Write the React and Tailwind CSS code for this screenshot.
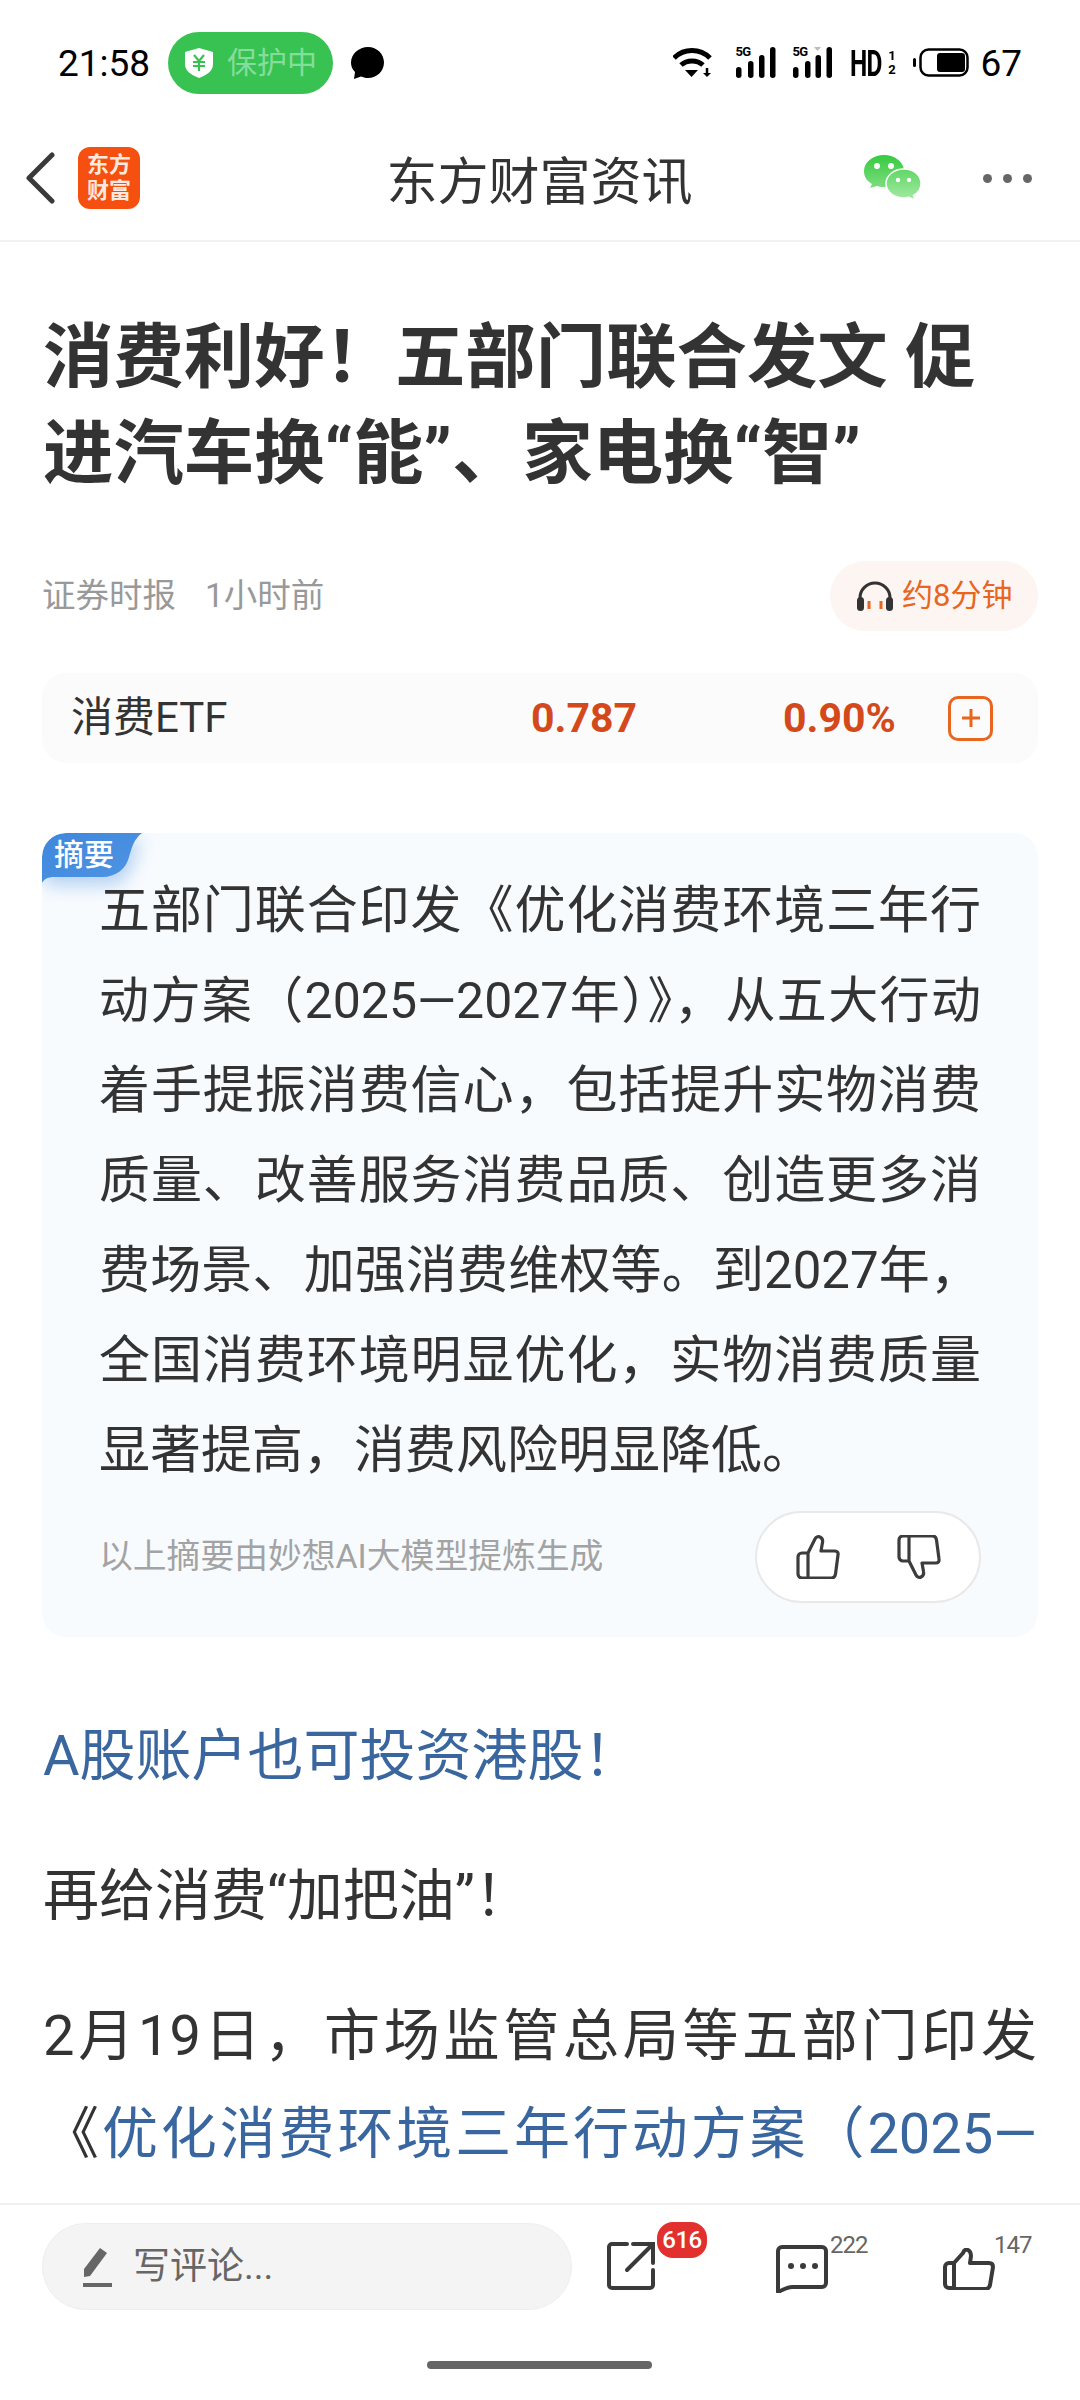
const SignalIcon = ({ bars, arrow }) => (
  <div className="relative h-[32px] w-[41px]">
    <span className="absolute left-0 top-[-2px] text-[13px] font-bold leading-[14px] tracking-[-0.5px] text-black">5G</span>
    <svg width="41" height="32" viewBox="0 0 41 32" className="absolute left-0 top-0">
      <rect x={bars[0]} y="20" width="5.500" height="11" rx="2.750" fill="#000" />
      <rect x={bars[1]} y="14" width="5.500" height="17" rx="2.750" fill="#000" />
      <rect x={bars[2]} y="8" width="5.500" height="23" rx="2.750" fill="#000" />
      <rect x={bars[3]} y="0" width="5.500" height="31" rx="2.750" fill="#000" />
      {arrow && <path d="M22 0h7l-3.500 4z" fill="#bbb" />}
    </svg>
  </div>
);

const StatusBar = () => (
  <div className="flex h-[100px] shrink-0 items-center justify-between pl-[58px] pr-[58px] pt-[26px]">
    <div className="flex items-center">
      <span className="w-[92px] text-[37px] leading-none text-black">21:58</span>
      <div className="ml-[18px] flex h-[62px] w-[165px] items-center rounded-[31px] bg-[#37c252] pl-[17px]">
        <svg width="28" height="30" viewBox="0 0 28 30">
          <path d="M14 0l14 4v12c0 7-6 11-14 14C6 27 0 23 0 16V4z" fill="#fff" />
          <path d="M9 7l5 6 5-6M8 14h12M8 18h12M14 13v10" stroke="#37c252" strokeWidth="2.200" fill="none" />
        </svg>
        <span className="ml-[14px] text-[30px] leading-none text-[#86dd9b]">保护中</span>
      </div>
      <svg width="34" height="32" viewBox="0 0 34 32" className="ml-[17px]">
        <path d="M18 0c9 0 16 7 16 15.500S27 31 18 31c-3 0-5-.6-7-1.500L4 32l1-7C2 22 1 19 1 15.500 1 7 9 0 18 0z" fill="#000" />
      </svg>
    </div>
    <div className="flex items-center">
      <svg width="40" height="30" viewBox="0 0 40 30">
        <path d="M1 10C11 0 27 0 37 10" stroke="#000" strokeWidth="5" fill="none" />
        <path d="M8 17c6-5.500 16-5.500 22 0" stroke="#000" strokeWidth="5" fill="none" />
        <path d="M12 22h13l-6.500 7z" fill="#000" />
        <path d="M34 20v6" stroke="#000" strokeWidth="2.500" />
        <path d="M30 25h8l-4 4z" fill="#000" />
      </svg>
      <div className="ml-[22px]"><SignalIcon bars={[1, 13, 24, 35]} /></div>
      <div className="ml-[16px]"><SignalIcon bars={[1, 13, 23.500, 34.500]} arrow /></div>
      <div className="ml-[17px] flex h-[30px] w-[30px] items-center">
        <span className="origin-left scale-x-[0.66] text-[37px] font-bold leading-none tracking-[-1px] text-black">HD</span>
      </div>
      <div className="ml-[8px] flex w-[7px] flex-col items-center text-[13px] font-bold leading-[14px] text-black">
        <span>1</span>
        <span>2</span>
      </div>
      <svg width="56" height="30" viewBox="0 0 56 30" className="ml-[18px]">
        <rect x="0" y="10" width="3" height="9" rx="1.500" fill="#000" />
        <rect x="7.500" y="1.500" width="47" height="26" rx="8" fill="none" stroke="#000" strokeWidth="2.500" />
        <rect x="24" y="5" width="28" height="19" rx="3" fill="#000" />
      </svg>
      <span className="ml-[11px] text-[37px] leading-none text-black">67</span>
    </div>
  </div>
);

const Header = () => (
  <div className="grid h-[142px] shrink-0 grid-cols-[1fr_auto_1fr] items-center border-b-2 border-[#f1f1f1] pl-[25px] pr-[48px] pt-[16px]">
    <div className="flex items-center">
      <svg width="30" height="52" viewBox="0 0 30 52">
        <path d="M27 3L4 26l23 23" stroke="#3a3a3a" strokeWidth="5" strokeLinecap="round" strokeLinejoin="round" fill="none" />
      </svg>
      <div className="ml-[23px] flex h-[62px] w-[62px] flex-col items-center justify-center rounded-[12px] bg-[#f5500f] text-[22px] font-bold leading-[26px] text-[#fde9df]">
        <span>东方</span>
        <span>财富</span>
      </div>
    </div>
    <div className="pl-[22px] pt-[8px] text-[51px] leading-none text-[#333]">东方财富资讯</div>
    <div className="flex items-center justify-end">
      <svg width="58" height="48" viewBox="0 0 58 48">
        <defs>
          <linearGradient id="wxBig" x1="0" y1="0" x2="0" y2="1">
            <stop offset="0" stopColor="#35cb3f" />
            <stop offset="1" stopColor="#7fdc80" />
          </linearGradient>
          <linearGradient id="wxSmall" x1="0" y1="0" x2="0" y2="1">
            <stop offset="0" stopColor="#5fd864" />
            <stop offset="1" stopColor="#a5eaa3" />
          </linearGradient>
        </defs>
        <path d="M20 1C9 1 0 8 0 17c0 6 3 10 8 13l-2 4 7-2c2 .6 4 1 7 1 11 0 20-7 20-16S31 1 20 1z" fill="url(#wxBig)" />
        <circle cx="13" cy="12" r="3" fill="#fff" />
        <circle cx="27" cy="12" r="3" fill="#fff" />
        <path d="M40 15c-10 0-18 6.500-18 14.500S30 44 40 44c2 0 3.500-.3 5-.7l6 3.200-1.500-5C54 39 57 35 57 29.500 57 21.500 50 15 40 15z" fill="url(#wxSmall)" stroke="#fff" strokeWidth="1.500" />
        <circle cx="34" cy="26" r="2.200" fill="#fff" />
        <circle cx="45" cy="26" r="2.200" fill="#fff" />
      </svg>
      <div className="ml-[61px] flex gap-[11px]">
        <span className="h-[9px] w-[9px] rounded-full bg-[#666]" />
        <span className="h-[9px] w-[9px] rounded-full bg-[#666]" />
        <span className="h-[9px] w-[9px] rounded-full bg-[#666]" />
      </div>
    </div>
  </div>
);

const SummaryLine = ({ children, last }) => (
  <div className={last ? 'whitespace-nowrap' : 'whitespace-nowrap [text-align-last:justify]'}>{children}</div>
);

const SmallThumb = () => (
  <svg width="44" height="44" viewBox="0 0 44 44">
    <path d="M12 43H6a4 4 0 0 1-4-4V22a4 4 0 0 1 4-4h6M12 43V18L19 4c1-2 3-3 5-2s3 3 2.500 5.500L25 16h14c2 0 3.500 1.500 3 4l-2.500 19c-.3 2.500-2 4-4 4z" stroke="#3c3c3c" strokeWidth="3.200" strokeLinejoin="round" fill="none" />
  </svg>
);

const SummaryTag = () => (
  <div className="absolute left-0 top-0 h-[90px] w-[160px]">
    <svg width="160" height="90" viewBox="0 0 160 90" className="absolute left-0 top-0">
      <defs>
        <linearGradient id="tagFill" x1="0" y1="0" x2="1" y2="1">
          <stop offset="0" stopColor="#3f87dc" />
          <stop offset="1" stopColor="#4f95e4" />
        </linearGradient>
        <filter id="tagGlow" x="-30%" y="-30%" width="170%" height="190%">
          <feGaussianBlur stdDeviation="9" />
        </filter>
      </defs>
      <path d="M0 4h100c-8 8-10 16-13 26-3 12-13 18-27 18H0z" fill="#4a90e0" opacity="0.4" filter="url(#tagGlow)" transform="translate(2 4)" />
      <path d="M0 24A24 24 0 0 1 24 0H100C92 6 90 14 87 24 84 36 74 44 60 44H12C6 44 2 46 0 50z" fill="url(#tagFill)" />
    </svg>
    <span className="absolute left-[12px] top-[7px] text-[30px] font-medium leading-none text-white">摘要</span>
  </div>
);

const Summary = () => (
  <div className="relative mx-[42px] mt-[70px] overflow-hidden rounded-[24px] bg-[#f8fbfe] pb-[34px] pl-[57px] pr-[57px]">
    <SummaryTag />
    <div className="relative pt-[33px] text-[51px] leading-[90px] text-[#333]">
      <SummaryLine>五部门联合印发《优化消费环境三年行</SummaryLine>
      <SummaryLine><span className="text-[50px]">动方案（2025—2027年）》，从五大行动</span></SummaryLine>
      <SummaryLine>着手提振消费信心，包括提升实物消费</SummaryLine>
      <SummaryLine>质量、改善服务消费品质、创造更多消</SummaryLine>
      <SummaryLine>费场景、加强消费维权等。到2027年，</SummaryLine>
      <SummaryLine>全国消费环境明显优化，实物消费质量</SummaryLine>
      <SummaryLine last>显著提高，消费风险明显降低。</SummaryLine>
    </div>
    <div className="mt-[15px] flex items-center justify-between">
      <span className="text-[33.800px] leading-none text-[#a3a3a3]">以上摘要由妙想AI大模型提炼生成</span>
      <div className="flex h-[92px] w-[226px] items-center justify-center gap-[57px] rounded-[46px] border-2 border-[#e9e9e9] bg-white">
        <SmallThumb />
        <div className="-scale-y-100"><SmallThumb /></div>
      </div>
    </div>
  </div>
);

const Article = () => (
  <div className="min-h-0 flex-1 overflow-hidden">
    <div className="px-[43px] pt-[68px] text-[70.400px] font-bold leading-[96px] text-[#333]">
      <div className="whitespace-nowrap">消费利好！五部门联合发文 促</div>
      <div className="whitespace-nowrap">进汽车换“能”、家电换“智”</div>
    </div>
    <div className="mx-[42px] mt-[59px] flex items-center justify-between">
      <div className="flex text-[33.500px] leading-none text-[#999]">
        <span>证券时报</span>
        <span className="ml-[29px]">1小时前</span>
      </div>
      <div className="flex h-[70px] w-[208px] items-center rounded-[35px] bg-[#fdf5f1] pl-[26px] text-[31px] text-[#e8661f]">
        <svg width="38" height="30" viewBox="0 0 38 30" className="mr-[8px]">
          <path d="M4 22V17a15 15 0 0 1 30 0v5" stroke="#333" strokeWidth="3" fill="none" />
          <rect x="1" y="16" width="7" height="14" rx="3.500" fill="#333" />
          <rect x="30" y="16" width="7" height="14" rx="3.500" fill="#333" />
          <path d="M13 20v8M25 20v8" stroke="#e8661f" strokeWidth="3" />
        </svg>
        约8分钟
      </div>
    </div>
    <div className="mx-[42px] mt-[42px] flex h-[90px] items-center rounded-[24px] bg-[#fbfbfb] pl-[29px] pr-[45px] leading-none">
      <span className="w-[460px] text-[42px] text-[#333]">消费ETF</span>
      <span className="w-[252px] text-[41px] font-bold text-[#d4491c]">0.787</span>
      <span className="text-[41px] font-bold text-[#d4491c]">0.90%</span>
      <div className="ml-auto flex h-[45px] w-[45px] items-center justify-center rounded-[10px] border-[3px] border-[#e8661f]">
        <svg width="26" height="26" viewBox="0 0 26 26">
          <path d="M13 4v18M4 13h18" stroke="#e8661f" strokeWidth="3" />
        </svg>
      </div>
    </div>
    <Summary />
    <div className="px-[43px] pt-[70px] text-[56px] leading-[98px] text-[#333]">
      <div className="text-[#3a669f]">A股账户也可投资港股！</div>
      <div className="mt-[42px]">再给消费“加把油”！</div>
      <div className="mt-[42px] [text-align-last:justify]">2月19日，市场监管总局等五部门印发</div>
      <div className="text-[#3a669f] [text-align-last:justify]">
        <span className="text-[#333]">《</span>优化消费环境三年行动方案（2025—
      </div>
    </div>
  </div>
);

const BottomBar = () => (
  <div className="relative h-[197px] shrink-0 border-t-2 border-[#f0f0f0]">
    <div className="flex items-start pl-[42px] pt-[18px]">
      <div className="flex h-[87px] w-[530px] items-center rounded-[44px] border border-[#eee] bg-[#f4f4f4] pl-[40px]">
        <svg width="30" height="40" viewBox="0 0 30 40">
          <path d="M1 30V22L17 1l7 5L7 29z" fill="#666" />
          <rect x="0" y="36" width="29" height="4" fill="#666" />
        </svg>
        <span className="ml-[20px] text-[37px] leading-none text-[#666]">写评论...</span>
      </div>
      <div className="relative ml-[35px] mt-[19px]">
        <svg width="48" height="48" viewBox="0 0 48 48">
          <path d="M20 2H5a3 3 0 0 0-3 3v38a3 3 0 0 0 3 3h38a3 3 0 0 0 3-3V28" stroke="#3a3a3a" strokeWidth="4" strokeLinecap="round" fill="none" />
          <path d="M20 28L45 3M26 2h20v19" stroke="#3a3a3a" strokeWidth="4" strokeLinecap="round" fill="none" />
        </svg>
        <span className="absolute left-[50px] top-[-20px] flex h-[36px] w-[50px] items-center justify-center rounded-[16px] bg-[#e2302f] text-[24px] font-medium leading-none tracking-[-0.5px] text-white">616</span>
      </div>
      <div className="relative ml-[121px] mt-[22px]">
        <svg width="52" height="48" viewBox="0 0 52 48">
          <path d="M6 2h40a4 4 0 0 1 4 4v32a4 4 0 0 1-4 4H16c-5 0-9 3-14 5V6a4 4 0 0 1 4-4z" stroke="#3a3a3a" strokeWidth="4" strokeLinejoin="round" fill="none" />
          <circle cx="15" cy="21" r="3" fill="#3a3a3a" />
          <circle cx="27" cy="21" r="3" fill="#3a3a3a" />
          <circle cx="39" cy="21" r="3" fill="#3a3a3a" />
        </svg>
        <span className="absolute left-[54px] top-[-12px] text-[24px] leading-none tracking-[-1px] text-[#666]">222</span>
      </div>
      <div className="relative ml-[115px] mt-[25px]">
        <svg width="52" height="42" viewBox="0 0 52 42">
          <path d="M11 40H6a4 4 0 0 1-4-4V19a4 4 0 0 1 4-4h5M11 40V15L20 5c1-3 3-4 5-3s3 3 3 6l-1 7h19c3 0 4 2 4 4l-3 18c-.4 2-2 4-4 4H6" stroke="#3a3a3a" strokeWidth="4" strokeLinejoin="round" fill="none" />
        </svg>
        <span className="absolute left-[51px] top-[-15px] text-[24px] leading-none tracking-[-1px] text-[#666]">147</span>
      </div>
    </div>
    <div className="absolute bottom-[31px] left-[427px] h-[8px] w-[225px] rounded-full bg-[#666]" />
  </div>
);

export default function App() {
  return (
    <div className="flex h-[2400px] w-[1080px] flex-col overflow-hidden bg-white font-['Roboto','Noto_Sans_CJK_SC',sans-serif]">
      <StatusBar />
      <Header />
      <Article />
      <BottomBar />
    </div>
  );
}
